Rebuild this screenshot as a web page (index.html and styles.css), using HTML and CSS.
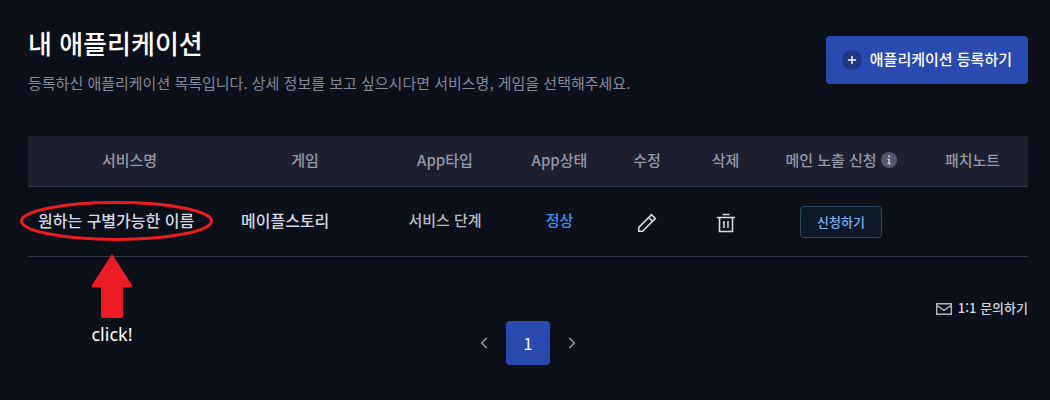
FILE: index.html
```html
<!DOCTYPE html>
<html lang="ko">
<head>
<meta charset="utf-8">
<meta name="viewport" content="width=device-width, initial-scale=1">
<title>내 애플리케이션</title>
<link rel="stylesheet" href="styles.css">
</head>
<body>
<main class="page">
  <header class="page-head">
    <div>
      <h1 class="title">내 애플리케이션</h1>
      <p class="desc">등록하신 애플리케이션 목록입니다. 상세 정보를 보고 싶으시다면 서비스명, 게임을 선택해주세요.</p>
    </div>
    <button class="register" type="button">
      <svg width="20" height="20" viewBox="0 0 20 20" aria-hidden="true"><circle cx="10" cy="10" r="10" fill="#223885"/><path d="M10 6v8M6 10h8" stroke="#fff" stroke-width="1.4"/></svg>
      <span>애플리케이션 등록하기</span>
    </button>
  </header>

  <table class="apps">
    <colgroup>
      <col class="c-name"><col class="c-game"><col class="c-type"><col class="c-state"><col class="c-edit"><col class="c-del"><col class="c-main"><col class="c-note">
    </colgroup>
    <thead>
      <tr>
        <th scope="col">서비스명</th>
        <th scope="col">게임</th>
        <th scope="col">App타입</th>
        <th scope="col">App상태</th>
        <th scope="col">수정</th>
        <th scope="col">삭제</th>
        <th scope="col"><span class="with-info">메인 노출 신청
          <svg width="16" height="16" viewBox="0 0 16 16" aria-hidden="true"><circle cx="8" cy="8" r="8" fill="#515771"/><path d="M7.2 3.5h1.8v1.6H7.2zM6.2 6.5h2.6v4.700H10v1.100H6.200v-1.100h1.200V7.600H6.200z" fill="#d5d8e2"/></svg></span></th>
        <th scope="col">패치노트</th>
      </tr>
    </thead>
    <tbody>
      <tr>
        <td class="strong marked">
          <a href="#app">원하는 구별가능한 이름</a>
          <div class="annotation">
            <svg width="194" height="118" viewBox="0 0 194 118" aria-hidden="true"><ellipse cx="96.500" cy="20" rx="95" ry="18.500" fill="none" stroke="#ed1c24" stroke-width="3"/><path d="M92 53l20 31v2.500h-9V115q0 2-2 2H83q-2 0-2-2V86.500h-9V84z" fill="#ed1c24"/></svg>
            <span class="click">click!</span>
          </div>
        </td>
        <td class="strong"><a href="#game">메이플스토리</a></td>
        <td class="center">서비스 단계</td>
        <td class="center state">정상</td>
        <td class="center tools">
          <button class="icon" type="button" aria-label="수정"><svg width="20" height="20" viewBox="0 0 20 20" fill="none" stroke="#d5d8e4" stroke-width="1.600"><path d="M1.800 18.300v-3.900L14.600 1.700l3.700 3.700L5.600 18.300zM11.800 4.500l3.700 3.700"/></svg></button>
        </td>
        <td class="center tools">
          <button class="icon" type="button" aria-label="삭제"><svg width="20" height="20" viewBox="0 0 20 20" fill="none" stroke="#d5d8e4" stroke-width="1.600"><path d="M6.500 1.500h7M1 4.500h18M3.500 4.500v14h13v-14M8 8v7M12 8v7"/></svg></button>
        </td>
        <td class="center tools"><button class="apply" type="button">신청하기</button></td>
        <td></td>
      </tr>
    </tbody>
  </table>

  <a class="inquiry" href="#inquiry">
    <svg width="16" height="12" viewBox="0 0 16 12" fill="none" stroke="#b4b6bf" stroke-width="1.400" aria-hidden="true"><path d="M.7.7h14.600v10.600H.7zM1 2.500l7 4.800 7-4.800"/></svg>
    <span>1:1 문의하기</span>
  </a>

  <nav class="pager" aria-label="페이지">
    <button class="arrow" type="button" aria-label="이전"><svg width="8" height="12" viewBox="0 0 8 12" fill="none" stroke="#9a9da8" stroke-width="1.400"><path d="M6.700 1L1.700 6l5 5"/></svg></button>
    <button class="current" type="button" aria-current="page">1</button>
    <button class="arrow" type="button" aria-label="다음"><svg width="8" height="12" viewBox="0 0 8 12" fill="none" stroke="#9a9da8" stroke-width="1.400"><path d="M1.300 1l5 5-5 5"/></svg></button>
  </nav>
</main>
</body>
</html>
```

FILE: styles.css
```css
* {
  box-sizing: border-box;
}

body {
  margin: 0;
  background: #0c1018;
  color: #b9bcc9;
  font-family: "Noto Sans CJK KR", "Noto Sans", sans-serif;
  font-size: 15px;
  line-height: 24px;
}

button {
  padding: 0;
  border: 0;
  background: none;
  color: inherit;
  font: inherit;
  cursor: pointer;
}

a {
  color: inherit;
  text-decoration: none;
}

svg {
  display: block;
}

.page {
  padding: 23px 22px 0 28px;
}

.page-head {
  display: flex;
  justify-content: space-between;
  align-items: flex-start;
  margin-bottom: 41px;
}

.title {
  margin: 0 0 8px;
  color: #fff;
  font-size: 26px;
  font-weight: 500;
  line-height: 40px;
}

.desc {
  margin: 0;
  color: #858999;
}

.register {
  display: flex;
  align-items: center;
  gap: 8px;
  height: 48px;
  margin-top: 13px;
  padding: 0 16px;
  border-radius: 4px;
  background: #2a4ab0;
  color: #fff;
  font-weight: 500;
}

.register span {
  padding-bottom: 2px;
}

.apps {
  width: 100%;
  border-collapse: separate;
  border-spacing: 0;
  table-layout: fixed;
}

.c-name { width: 20.3%; }
.c-game { width: 14.8%; }
.c-type { width: 13.2%; }
.c-state { width: 9.7%; }
.c-edit { width: 7.8%; }
.c-del { width: 7.9%; }
.c-main { width: 15.2%; }
.c-note { width: 11.1%; }

.apps th {
  height: 51px;
  padding: 0 0 2px;
  border-bottom: 1px solid #313644;
  background: #1e2030;
  color: #9498a5;
  font-weight: 500;
}

.apps td {
  height: 70px;
  padding: 0 10px 3px;
  border-bottom: 1px solid #313644;
}

.with-info {
  display: flex;
  align-items: center;
  justify-content: center;
  gap: 4px;
}

.apps .center {
  padding: 0 0 3px;
  text-align: center;
  font-weight: 500;
}

.apps .tools {
  padding: 0;
}

.strong {
  color: #d5d8e4;
  font-size: 16px;
  font-weight: 500;
}

.apps .state {
  color: #3392ff;
}

.marked {
  position: relative;
}

.annotation {
  position: absolute;
  top: 14px;
  left: -8px;
  pointer-events: none;
}

.click {
  display: block;
  width: 184px;
  margin-top: 3px;
  color: #fff;
  font-family: "Noto Sans", sans-serif;
  font-size: 18px;
  font-weight: 400;
  text-align: center;
}

.icon {
  vertical-align: middle;
}

.apply {
  height: 32px;
  padding: 0 16px;
  border: 1px solid #2b4762;
  border-radius: 4px;
  background: #0e1826;
  color: #78b2f5;
  font-size: 13px;
  font-weight: 500;
}

.inquiry {
  display: flex;
  align-items: center;
  gap: 6px;
  width: fit-content;
  margin: 40px 0 0 auto;
  color: #d0d3de;
  font-size: 13px;
  font-weight: 500;
}

.inquiry span {
  padding-bottom: 2px;
  line-height: 22px;
}

.pager {
  display: flex;
  align-items: center;
  justify-content: center;
  gap: 10px;
}

.arrow {
  display: flex;
  align-items: center;
  justify-content: center;
  width: 24px;
  height: 44px;
}

.current {
  width: 44px;
  height: 44px;
  border-radius: 4px;
  background: #2a4ab0;
  color: #fff;
  font-size: 16px;
}
```
